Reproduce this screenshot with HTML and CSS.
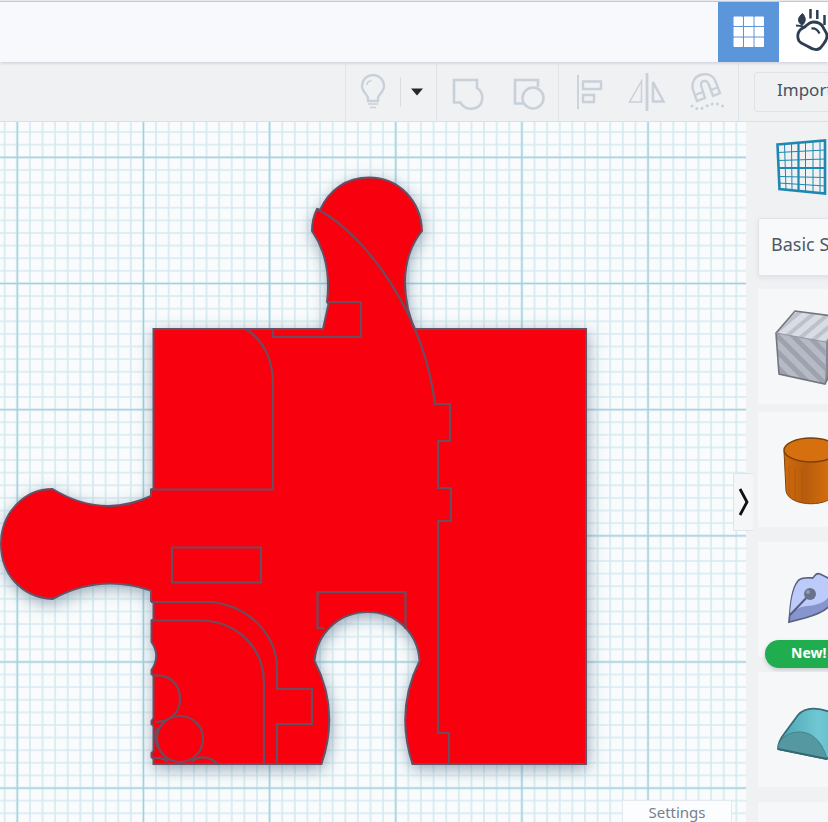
FILE: index.html
```html
<!DOCTYPE html>
<html lang="en">
<head>
<meta charset="utf-8">
<title>3D Editor</title>
<link rel="stylesheet" href="styles.css">
</head>
<body>
<header class="topbar">
  <button class="mode mode--active" aria-label="3D design">
    <svg width="32" height="32" viewBox="0 0 32 32" fill="#fff"><rect x="0.500" y="0.500" width="9.500" height="9.500" rx="1"/><rect x="11" y="0.500" width="9.500" height="9.500"/><rect x="21.500" y="0.500" width="9.500" height="9.500" rx="1"/><rect x="0.500" y="11" width="9.500" height="9.500"/><rect x="11" y="11" width="9.500" height="9.500"/><rect x="21.500" y="11" width="9.500" height="9.500"/><rect x="0.500" y="21.500" width="9.500" height="9.500" rx="1"/><rect x="11" y="21.500" width="9.500" height="9.500"/><rect x="21.500" y="21.500" width="9.500" height="9.500" rx="1"/></svg>
  </button>
  <button class="mode mode--sim" aria-label="Sim lab">
    <svg width="36" height="46" viewBox="0 -1 36 46" fill="none" stroke="#2c3e50" stroke-width="2.800">
      <path d="M15.500-1v9.500M22.300 0v9M29.500 5v10" stroke-width="2.500"/>
      <path d="M1 15.500c3 0 5 .5 8 1.500" stroke-width="2"/>
      <path d="M7.500 3.500c-5 4-5.500 8-.5 12 4.500-4 4-8 .5-12z" fill="#2c3e50" stroke-width="1"/>
      <path d="M18 12c-5 0-6 4-10 6-5 2-6.500 8-4 13 2 3 6 3.500 10 6 5 3.500 10 4 13-1 2-3 5-5 5-10 0-4-3-6-4-9-2-4-6-5-10-5z"/>
      <path d="M16.500 18.500c4-.5 6.500 2 8 5" stroke-width="2.300"/>
    </svg>
  </button>
</header>

<div class="toolbar">
  <div class="group group--visibility">
    <button aria-label="Show all">
      <svg width="26" height="36" viewBox="0 0 26 36" fill="none" stroke="#c8d0da" stroke-width="2.400"><path d="M8 27v-3c0-3-6-6-6-12a11 11 0 0 1 22 0c0 6-6 9-6 12v3z"/><path d="M7 11c0-2 2-4 4.500-4.500" stroke-width="1.500"/><path d="M8 30h10M10 33.500h6" stroke-width="1.600"/></svg>
    </button>
    <span class="rule"></span>
    <button aria-label="Visibility menu"><svg width="12" height="8" viewBox="0 0 12 8"><path d="M0 .5h12L6 7.500z" fill="#24292b"/></svg></button>
  </div>
  <div class="group group--combine">
    <button aria-label="Group"><svg width="32" height="32" viewBox="0 0 32 32" fill="none" stroke="#c8d0da" stroke-width="2.600"><path d="M2 2h23v8c8 5 7 19-4 20.500-6 1-11-2-12.500-6H2z"/></svg></button>
    <button aria-label="Ungroup"><svg width="32" height="32" viewBox="0 0 32 32" fill="none" stroke="#c8d0da" stroke-width="2.600"><path d="M10 25.500H2V2h23v7"/><circle cx="20" cy="20" r="10.500"/></svg></button>
  </div>
  <div class="group group--arrange">
    <button aria-label="Align"><svg width="28" height="34" viewBox="0 0 28 34" fill="none" stroke="#c8d0da" stroke-width="2.400"><path d="M2 0v34" stroke-width="1.800"/><path d="M7 6.500h18V14H7z"/><path d="M7 20h11v7H7z"/></svg></button>
    <button aria-label="Mirror"><svg width="38" height="38" viewBox="0 0 38 38" fill="none" stroke="#c8d0da"><path d="M19 0v38" stroke-width="2.800"/><path d="M13.500 8v21H1.500z" stroke-width="1.500"/><path d="M25 9v19.500h10.500z" stroke-width="2.500"/></svg></button>
    <button aria-label="Cruise"><svg width="38" height="38" viewBox="0 0 38 38" fill="none" stroke="#c8d0da" stroke-width="2.400"><path d="M7 28L3 17C1 9 5 3 12 1.500s12 2 14 8L30 20l-7 3-4-11c-1.500-4-3-4.500-5-4s-4 2-2.500 6L15 25zM5 22l8-3M21 17l8-3"/><path d="M2 33q6 5 13 1t12-3 9 4" stroke-width="3" stroke-linecap="round" stroke-dasharray="0 5.400"/></svg></button>
  </div>
  <div class="transfer"><button class="import">Import</button></div>
</div>

<main class="workspace">
  <section class="canvas">
    <svg class="drawing" width="746" height="700" viewBox="0 122 746 700">
      <defs>
        <pattern id="minor" x="17.300" y="157.300" width="12.615" height="12.615" patternUnits="userSpaceOnUse"><path d="M0 0H12.615M0 0V12.615M0 12.615H12.615M12.615 0V12.615" stroke="#d3ebf1" stroke-width="1.600" fill="none"/></pattern>
        <pattern id="major" x="-45.700" y="94.300" width="126.150" height="126.150" patternUnits="userSpaceOnUse"><path d="M0 63H126.150M63 0V126.150" stroke="#a3d0de" stroke-width="1.500" fill="none"/></pattern>
        <filter id="shadow" x="-10%" y="-10%" width="120%" height="120%"><feDropShadow dx="1" dy="4" stdDeviation="8" flood-color="#53708a" flood-opacity=".6"/></filter>
      </defs>
      <rect y="122" width="746" height="700" fill="#f9fbfc"/>
      <rect y="122" width="746" height="700" fill="url(#minor)"/>
      <rect y="122" width="746" height="700" fill="url(#major)"/>
      <path filter="url(#shadow)" fill="#f80009" stroke="#665166" stroke-width="2" d="M153.500 329H323L328.500 304L327 302Q332 260 312 231Q312 219 317 209L320 210C329 190 346 177.500 369 177.500C399 177.500 421 201 422 231Q398 261 408 309L414 329H586V764H412.500Q395 710 419.500 661C418 633 396 612 368 612C339 612 317 633 314.500 661Q340 710 321.500 764H153.500V759L151.500 757V753L153.500 751V726L151.500 724V721L153.500 718V676L151.500 674V670Q161 656 151.500 642V620.500L153.500 619V602L151 601V590.500Q100 573 52.500 599C21 597 1 574 1 544C1 513 24 489 52.500 489Q102 519 151 496V489.500L153.500 489Z"/>
      <g fill="none" stroke="#6c4d60" stroke-width="2.200">
        <path d="M151 489.500H273V385Q273 347 246 329M273 329V337H361V302H327M317 209C367 235 424 315 435 404H450V441H438V488H451V521H438V733H449V764"/>
        <path d="M172 547.500H261V582.500H172zM324 628H317.500V592H405.500V629"/>
        <path d="M151 602H212C252 607 277 637 277 669V689H312V724H277V764M151 620.500H204C240 623 264 650 264 683V764"/>
        <path d="M153 675.500C171 674 180 685 180 699C180 713 170 722 155 722M158 728Q152 736 158 747M154 758Q163 757 168 762M191 762Q204 752 218 764"/><circle cx="180" cy="739" r="23"/>
      </g>
    </svg>
    <button class="settings">Settings</button>
    <button class="collapse" aria-label="Collapse panel"><svg width="12" height="30" viewBox="0 0 12 30"><path d="M2 2l7 13-7 13" fill="none" stroke="#111" stroke-width="2.800"/></svg></button>
  </section>

  <aside class="panel">
    <button class="workplane" aria-label="Workplane">
      <svg width="54" height="56" viewBox="0 0 54 56" fill="none" stroke="#1e88b0"><path d="M8.500 5l1.500 46M15.500 4.500L16 52M29.500 3.500V53M37 3v51M44 2.500V54M2 13.500L49 11M2 21.500L49 20M3 37.500l46 1M3 44l46 3" stroke-width="1"/><path d="M22.500 4v48.500M2 29h47" stroke-width="2.200"/><path d="M1.500 5.500L49 1.500V54.500L3.500 50z" stroke-width="2.600"/></svg>
    </button>
    <select class="library" aria-label="Shape library"><option>Basic Shapes</option></select>
    <button class="card card--hole" aria-label="Box hole">
      <svg width="84" height="84" viewBox="0 0 84 84">
        <defs><pattern id="stripe" width="11" height="11" patternUnits="userSpaceOnUse" patternTransform="rotate(-45)"><rect width="11" height="11" fill="#b6bac4"/><rect width="5" height="11" fill="#9ea2af"/></pattern><pattern id="stripeTop" width="10" height="10" patternUnits="userSpaceOnUse" patternTransform="rotate(50)"><rect width="10" height="10" fill="#d8dce3"/><rect width="4" height="10" fill="#bcc1cb"/></pattern></defs>
        <path d="M2 28L21 6l45 6-14 25z" fill="url(#stripeTop)"/><path d="M2 28l50 9-1 42L5 69z" fill="url(#stripe)"/><path d="M52 37l14-25-3 43-12 24z" fill="#858995"/><path d="M2 28L21 6l45 6-3 43-12 24L5 69z" fill="none" stroke="#74767d" stroke-width="1.600"/><path d="M2 28l50 9" stroke="#92959f"/>
      </svg>
    </button>
    <div class="shapes">
      <button class="card" aria-label="Cylinder">
        <svg width="84" height="84" viewBox="0 0 84 84"><defs><linearGradient id="orange"><stop stop-color="#d06a0b"/><stop offset=".4" stop-color="#b75c0d"/><stop offset="1" stop-color="#df750c"/></linearGradient></defs><path d="M10 23l2 40c3 17 47 17 50 0l2-40z" fill="url(#orange)" stroke="#80450f"/><path d="M15 37v32M21 40v33M28 41v34" stroke="#9f500d" opacity=".5"/><ellipse cx="37" cy="22" rx="27" ry="12" fill="#d6700e" stroke="#783f0d" stroke-width="1.400"/></svg>
      </button>
      <button class="card" aria-label="Sketch shape">
        <svg width="84" height="84" viewBox="0 0 84 84"><path d="M15 64L16 54C17 40 20 27 25 22C29 19 35 20 39 20C42 16 43 15 46 16L62 24L56 29C66 47 49 55 31 60Z" fill="#8795cf" stroke="#59617f" stroke-width="1.800"/><path d="M16 56C17 40 20 28 25 23C29 20 35 21 39 21C42 17 43 16 46 17L60 24L55 29C59 43 45 47 33 48C25 49 20 52 16 56Z" fill="#bdcbfb"/><path d="M16 57l20-21" stroke="#555e7a" stroke-width="2"/><circle cx="36" cy="36" r="6" fill="#68728d"/><circle cx="34" cy="34" r="2" fill="#929bb4"/></svg>
        <span class="badge">New!</span>
      </button>
      <button class="card" aria-label="Round roof">
        <svg width="84" height="84" viewBox="0 0 84 84"><defs><linearGradient id="teal"><stop stop-color="#4ba2b0"/><stop offset=".6" stop-color="#70c8d5"/><stop offset="1" stop-color="#5db4c1"/></linearGradient></defs><path d="M4 61C4 55 6 51 10 46L24 27C32 18 46 20 56 24C66 29 70 39 72 52L53 71Z" fill="url(#teal)" stroke="#386b73" stroke-width="1.800"/><path d="M4 61C4 51 14 44 25 44C40 44 49 56 53 71Z" fill="#5598a2" stroke="#46818b"/><path d="M4 61l49 10" stroke="#356870" stroke-width="2"/></svg>
      </button>
      <button class="card" aria-label="More shapes"></button>
    </div>
  </aside>
</main>
</body>
</html>
```
FILE: styles.css
```css
* { box-sizing: border-box; }
body {
  margin: 0;
  height: 100vh;
  display: flex;
  flex-direction: column;
  overflow: hidden;
  background: #f0f1f3;
  color: #47525f;
  font-family: "Noto Sans", sans-serif;
}
button { font: inherit; color: inherit; border: 0; padding: 0; background: none; cursor: pointer; }
svg { display: block; flex: none; }

.topbar {
  height: 61px;
  flex: none;
  display: flex;
  justify-content: flex-end;
  margin-top: 1px;
  border-top: 1px solid #c5c9cf;
  background: #f8f9fc;
  box-shadow: 0 1px 3px #c7cbd5;
  position: relative;
}
.mode { display: flex; align-items: center; justify-content: center; width: 61px; background: #5b95da; }
.mode--sim { width: 49px; background: #fff; overflow: hidden; justify-content: flex-start; padding-left: 16px; }

.toolbar {
  height: 60px;
  flex: none;
  display: flex;
  justify-content: flex-end;
  border-bottom: 1px solid #dcdfe3;
}
.group { display: flex; align-items: center; border-left: 1px solid #e0e4e9; }
.group--visibility { width: 91px; padding-left: 14px; gap: 14px; }
.group--visibility button:last-child { margin-left: -4px; }
.rule { width: 1px; height: 30px; background: #d9dce2; }
.group--combine { width: 122px; padding: 4px 0 0 15px; gap: 29px; }
.group--arrange { width: 180px; padding-left: 17px; gap: 24px; }
.transfer { width: 90px; border-left: 1px solid #e0e4e9; padding: 10px 0 0 15px; overflow: hidden; }
.import {
  width: 110px;
  height: 40px;
  border: 1px solid #dfe2e7;
  border-radius: 3px;
  padding: 0 0 6px 22px;
  text-align: left;
  font-size: 17px;
}

.workspace { flex: 1; min-height: 0; display: flex; }
.canvas { flex: 1; min-width: 0; position: relative; background: #f9fbfc; }
.drawing { position: absolute; top: 0; right: 0; }
.settings {
  position: absolute;
  right: 14px;
  bottom: 0;
  width: 110px;
  height: 22px;
  background: #fcfdfe;
  border: 1px solid #e5eaee;
  border-bottom: 0;
  font-size: 15px;
  line-height: 22px;
  color: #75808b;
}
.collapse {
  position: absolute;
  z-index: 1;
  top: 351px;
  right: -7px;
  width: 20px;
  height: 58px;
  display: flex;
  align-items: center;
  justify-content: center;
  background: #f5f6f8;
  border: 1px solid #e0e3e7;
  border-right: 0;
}

.panel { width: 82px; flex: none; padding-left: 12px; overflow: hidden; }
.workplane { display: block; margin: 17px 0 0 18px; }
.library {
  appearance: none;
  display: block;
  width: 180px;
  height: 58px;
  margin: 23px 0 13px;
  padding: 0 12px 6px;
  border: 1px solid #e2e4e8;
  border-radius: 3px;
  background: #f8f9fb;
  box-shadow: 0 2px 5px #dfe1e5;
  font: 18px "Noto Sans", sans-serif;
  color: #4e5863;
}
.card {
  position: relative;
  width: 116px;
  height: 115px;
  display: flex;
  align-items: center;
  padding-left: 16px;
  background: #f6f7f9;
}
.card--hole { margin-bottom: 8px; }
.shapes { display: grid; gap: 15px; }
.badge {
  position: absolute;
  left: 7px;
  bottom: -11px;
  width: 100px;
  height: 28px;
  padding-left: 26px;
  border-radius: 14px;
  background: #20ad4f;
  box-shadow: 0 2px 4px #c5c9cc;
  color: #fff;
  font-size: 14px;
  font-weight: 700;
  line-height: 26px;
  text-align: left;
}
```
